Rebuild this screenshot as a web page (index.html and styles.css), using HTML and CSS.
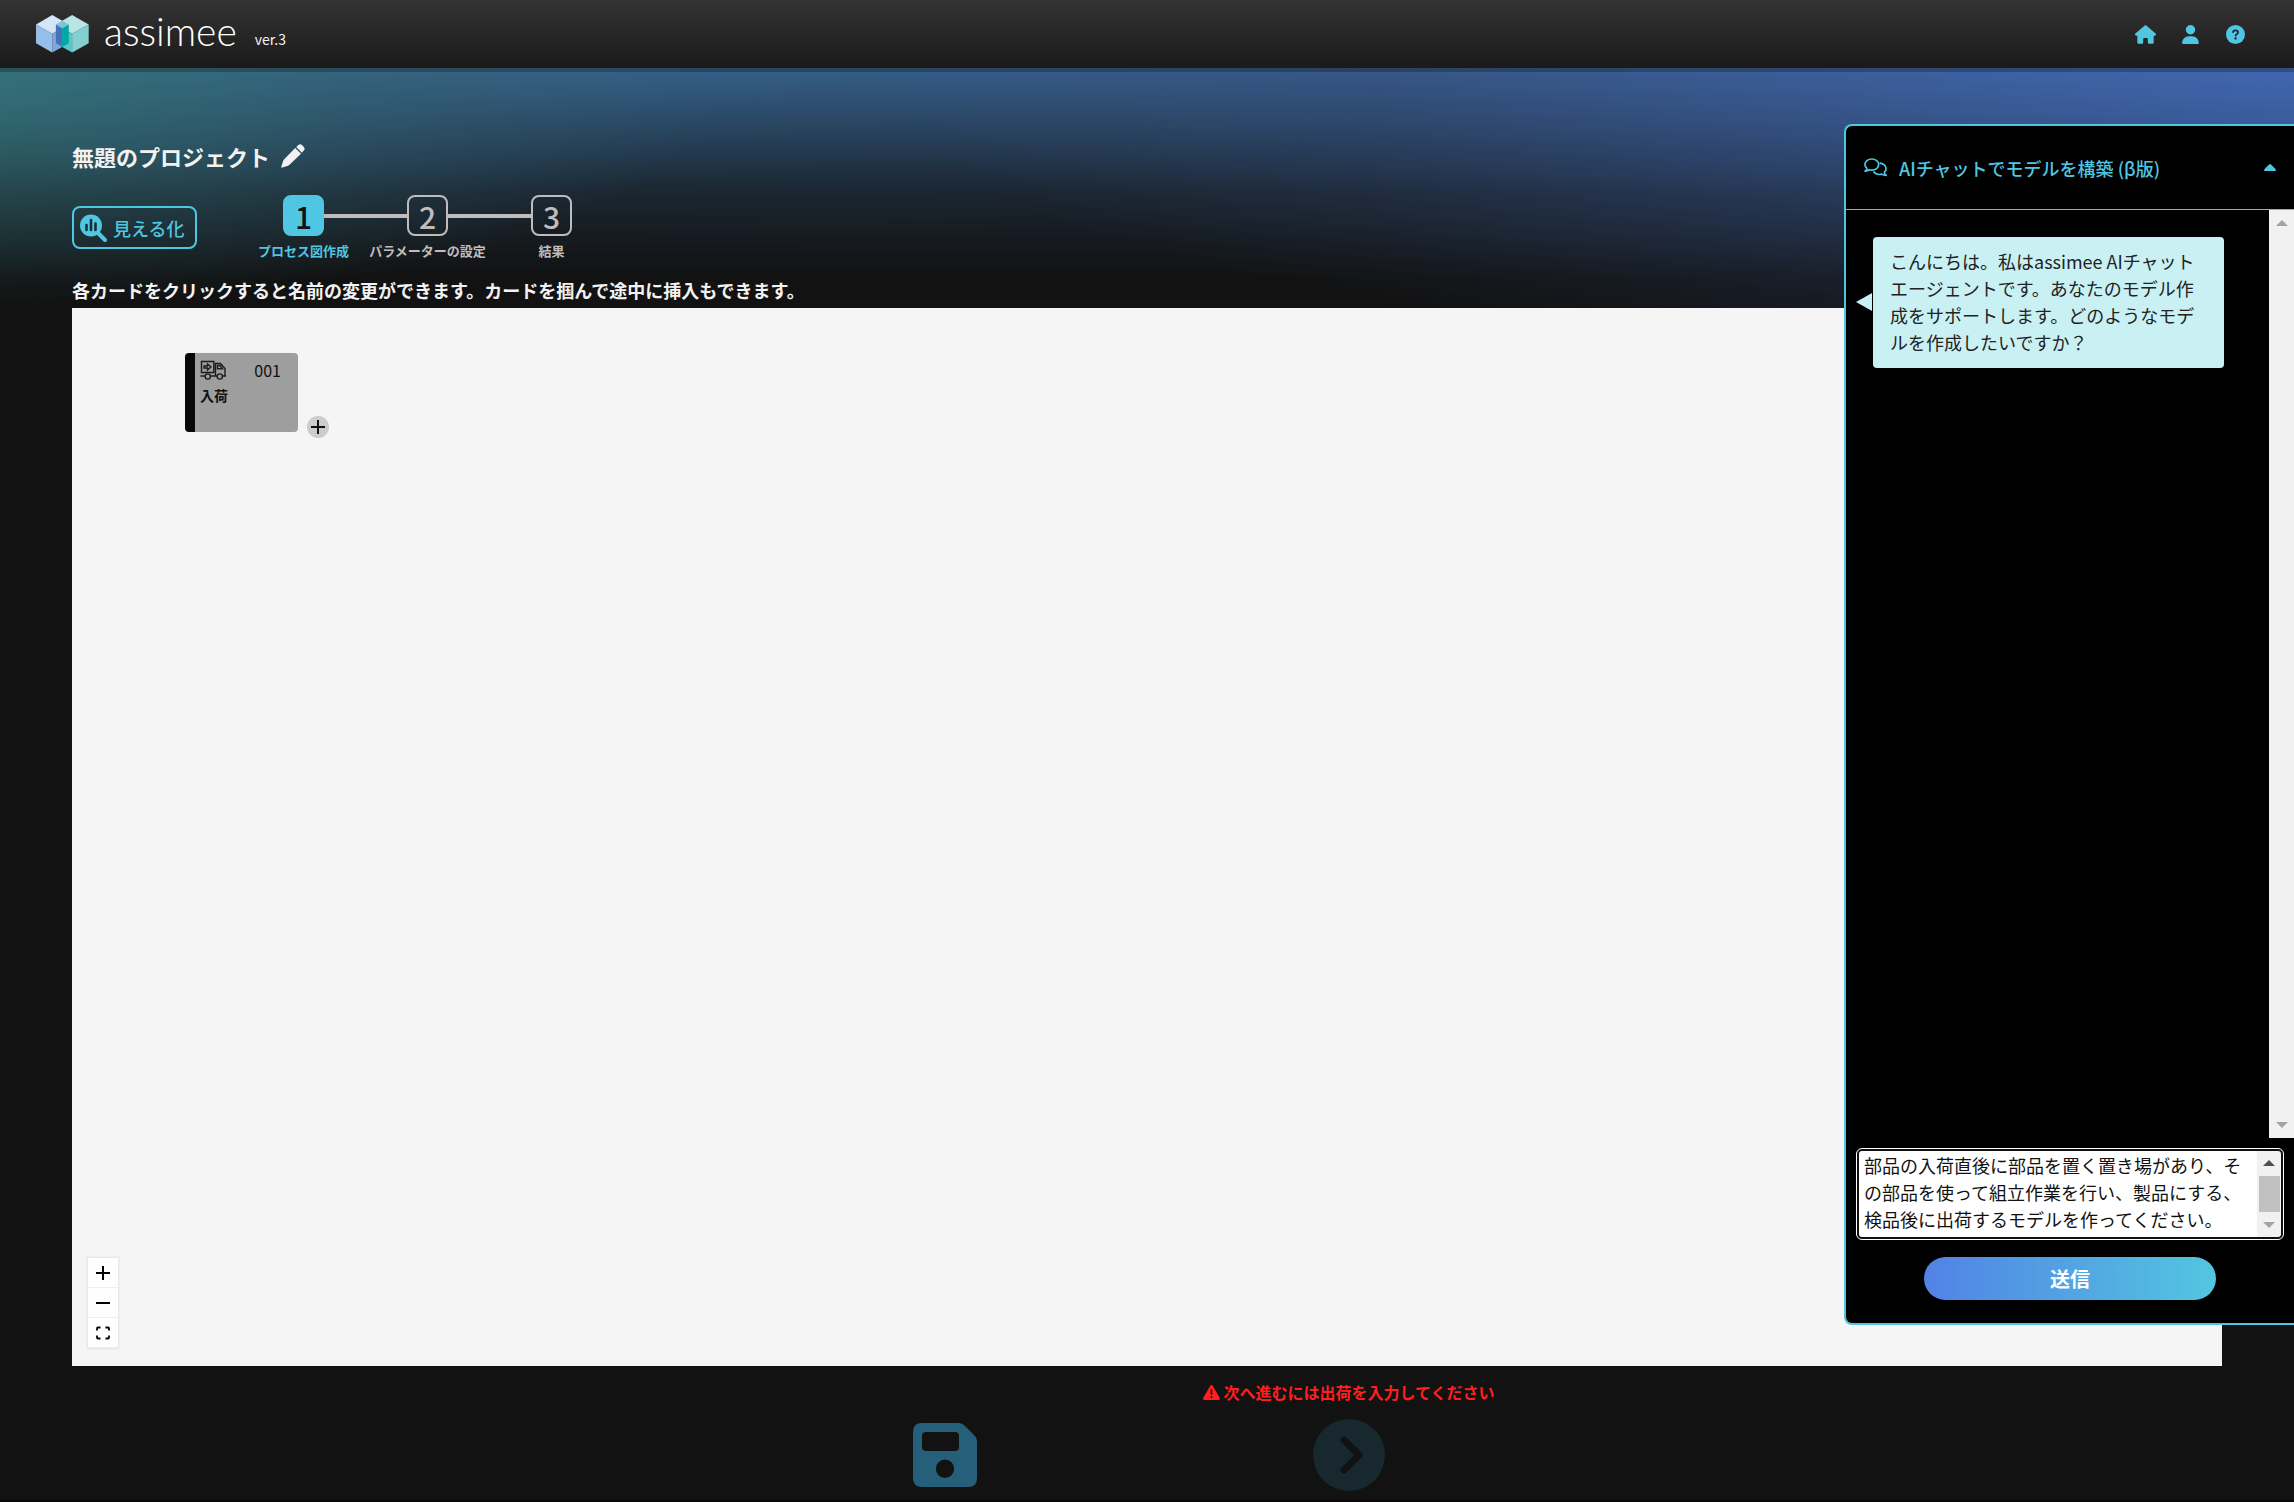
FILE: index.html
```html
<!DOCTYPE html>
<html lang="ja">
<head>
	<meta charset="UTF-8">
	<title>assimee</title>
	<link rel="stylesheet" href="styles.css">
</head>
<body>
	<header class="header">
		<a class="logo" href="#" aria-label="assimee">
			<svg class="logo_mark" viewBox="108 45 160 114">
				<path fill="#d3e5f6" d="M157 45l50 28-50 28-49-28z"/>
				<path fill="#95bfe8" d="M108 73l49 28v57l-49-28z"/>
				<path fill="#7fa8dc" d="M157 101l50-28v57l-50 28z"/>
				<path fill="#bbe4e5" d="M217 45l50 28-50 28-49-28z"/>
				<path fill="#59c4ca" d="M187 85l30 16v57l-30-17z"/>
				<path fill="#84cfd2" d="M217 101l50-28v57l-50 28z"/>
				<path fill="#80c2da" d="M187 62l20 11-20 12-19-12z"/>
				<path fill="#4772b9" d="M168 73l19 12v56l-19-11z"/>
				<path fill="#00a9a6" d="M187 85l20-12v57l-20 11z"/>
			</svg>
			<span class="logo_name">assimee</span>
			<span class="version">ver.3</span>
		</a>
		<nav class="nav">
			<a href="#" aria-label="ホーム">
				<svg width="21" height="19" viewBox="0 0 576 512"><path fill="currentColor" d="M575.8 255.5c0 18-15 32.1-32 32.1h-32l.7 184.4c0 22.1-17.9 40-40 40H392c-22.1 0-40-17.9-40-40V384c0-17.7-14.3-32-32-32H256c-17.7 0-32 14.3-32 32v88c0 22.1-17.9 40-40 40H104c-22.1 0-40-17.9-40-40V287.6H32c-18 0-32-14-32-32.1c0-9 3-17 10-24L266.4 8c7-7 15-8 22-8s15 2 21 7L564.8 231.5c8 7 12 15 11 24z"/></svg>
			</a>
			<a href="#" aria-label="アカウント">
				<svg width="17" height="19" viewBox="0 0 448 512"><path fill="currentColor" d="M224 256A128 128 0 1 0 224 0a128 128 0 1 0 0 256zm-45.7 48C79.8 304 0 383.8 0 482.3C0 498.7 13.3 512 29.7 512H418.3c16.4 0 29.7-13.3 29.7-29.7C448 383.8 368.2 304 269.7 304H178.3z"/></svg>
			</a>
			<a href="#" aria-label="ヘルプ">
				<svg width="19" height="19" viewBox="0 0 19 19"><circle cx="9.5" cy="9.5" r="9.5" fill="currentColor"/><path d="M7 7.2q.2-1.900 2.500-1.900t2.500 1.900q0 1.300-1.300 2-1.100.6-1.100 1.500" fill="none" stroke="#252525" stroke-width="1.8" stroke-linecap="round"/><circle cx="9.5" cy="13.4" r="1.2" fill="#252525"/></svg>
			</a>
		</nav>
	</header>

	<main class="main">
		<div class="project">
			<h1>無題のプロジェクト</h1>
			<button class="edit" type="button" aria-label="名前を変更">
				<svg width="24" height="24" viewBox="0 0 24 24" fill="currentColor"><path d="M14.2 4l5.800 5.800L8.500 20.700q-.9.9-2.100 1.200L1.200 23.600q-1.200.3-.9-.9L2 17.300q.4-1.200 1.200-2z"/><path d="M15.200 3l2.200-2q1.800-1.600 3.600.1l1.800 1.800q1.700 1.800 0 3.600L20.900 8.800z"/></svg>
			</button>
		</div>

		<div class="toolbar">
			<button class="visualize" type="button">
				<svg width="27" height="28" viewBox="0 0 27 28"><circle cx="11" cy="11.5" r="11" fill="#4fc6e2"/><path d="M18 19l7 7" stroke="#4fc6e2" stroke-width="4" stroke-linecap="round"/><path d="M6.500 11v5M11 6v10M15.500 9.500v6.500" stroke="#1b3036" stroke-width="2.600" stroke-linecap="round"/></svg>
				見える化
			</button>
			<ol class="steps">
				<li class="active">
					<div class="step_row"><b>1</b></div>
					<p>プロセス図作成</p>
				</li>
				<li>
					<div class="step_row"><b>2</b></div>
					<p>パラメーターの設定</p>
				</li>
				<li>
					<div class="step_row"><b>3</b></div>
					<p>結果</p>
				</li>
			</ol>
		</div>

		<p class="guide">各カードをクリックすると名前の変更ができます。カードを掴んで途中に挿入もできます。</p>

		<div class="canvas">
			<div class="node">
				<div class="card">
					<div class="card_head">
						<svg width="27" height="20" viewBox="0 0 27 20" fill="none" stroke="#1c1c1c" stroke-width="1.4"><path d="M1.500 12.500V1.500h12.300v11zM.5 16H5M10.500 16h6.500M22.500 16H26M15.500 16V3.500h5l4.500 5V16M17.500 5.500h2.500l2.500 3.200h-5z"/><path d="M4 6h3.500V4l3.500 3-3.500 3V8H4z"/><circle cx="7.8" cy="16.5" r="2.6"/><circle cx="19.8" cy="16.5" r="2.6"/></svg>
						<span>001</span>
					</div>
					<p>入荷</p>
				</div>
				<button class="add" type="button" aria-label="追加">
					<svg width="16" height="16" viewBox="0 0 16 16"><path d="M8 1v14M1 8h14" stroke="#111" stroke-width="2"/></svg>
				</button>
			</div>
			<div class="controls">
				<button type="button" aria-label="拡大"><svg width="14" height="14" viewBox="0 0 14 14"><path d="M7 0v14M0 7h14" stroke="#000" stroke-width="2"/></svg></button>
				<button type="button" aria-label="縮小"><svg width="14" height="14" viewBox="0 0 14 14"><path d="M0 7h14" stroke="#000" stroke-width="2"/></svg></button>
				<button type="button" aria-label="全体表示"><svg width="14" height="14" viewBox="0 0 14 14"><path d="M1 4.500V2.500Q1 1.500 2 1.500H4.500M9.500 1.500H12q1 0 1 1v2M13 9.500v2q0 1-1 1H9.500M4.500 12.500H2q-1 0-1-1v-2" fill="none" stroke="#000" stroke-width="1.800"/></svg></button>
			</div>
		</div>
	</main>

	<footer class="footer">
		<div class="action">
			<p class="warning"></p>
			<button type="button" aria-label="保存">
				<svg width="64" height="64" viewBox="0 0 64 64"><path fill="#265f79" fill-rule="evenodd" d="M9 0h37q3 0 5.500 2.500l10 10Q64 15 64 18v37q0 9-9 9H9q-9 0-9-9V9Q0 0 9 0zM13 9q-4 0-4 4v11q0 4 4 4h29q4 0 4-4V13q0-4-4-4zM32 36.500a9.200 9.200 0 1 0 0 18.400a9.200 9.200 0 1 0 0-18.400z"/></svg>
			</button>
		</div>
		<div class="action">
			<p class="warning">
				<svg width="17" height="15" viewBox="0 0 17 15"><path fill="currentColor" d="M7.300.7q1.200-1.400 2.400 0l7 12q.7 2-1.200 2.300h-14Q-.4 14.700.3 12.700z"/><path d="M8.500 4.800v4.400" stroke="#121212" stroke-width="1.600" stroke-linecap="round"/><circle cx="8.5" cy="12" r="1" fill="#121212"/></svg>
				次へ進むには出荷を入力してください
			</p>
			<button type="button" disabled aria-label="次へ">
				<svg width="72" height="72" viewBox="0 0 72 72"><circle cx="36" cy="36" r="36" fill="#18282f"/><path d="M31 21l15 15-15 15" fill="none" stroke="#121212" stroke-width="7" stroke-linecap="round" stroke-linejoin="round"/></svg>
			</button>
		</div>
	</footer>

	<aside class="chat">
		<button class="chat_head" type="button">
			<svg width="23" height="19" viewBox="0 0 23 19" fill="none" stroke="currentColor" stroke-width="1.7" stroke-linejoin="round"><path d="M2.900 10.300Q.9 8.600.9 6.600C.9 3.500 4 1 7.800 1s6.900 2.500 6.900 5.600-3.100 5.600-6.900 5.600q-1.300 0-2.500-.4Q3.600 13 1 13.200q1.700-1.400 1.900-2.900z"/><path d="M15.600 5.200c3.600.1 6.500 2.500 6.500 5.500q0 2-1.800 3.700.3 1.500 1.800 2.900-2.500 0-4.300-1.200-1.200.4-2.400.4-3.900 0-5.900-2.900"/></svg>
			<span>AIチャットでモデルを構築 (β版)</span>
			<svg class="caret" width="12" height="7" viewBox="0 0 12 7"><path fill="currentColor" d="M5 .5q1-1 2 0l4.700 4.800Q12.300 7 11 7H1Q-.3 7 .3 5.300z"/></svg>
		</button>
		<div class="chat_body">
			<div class="messages">
				<p class="bubble">こんにちは。私はassimee AIチャットエージェントです。あなたのモデル作成をサポートします。どのようなモデルを作成したいですか？</p>
			</div>
			<div class="scrollbar">
				<i class="up"></i>
				<i class="down"></i>
			</div>
		</div>
		<form class="compose">
			<div class="field">
				<textarea aria-label="メッセージ">部品の入荷直後に部品を置く置き場があり、その部品を使って組立作業を行い、製品にする、検品後に出荷するモデルを作ってください。</textarea>
				<div class="scrollbar field_bar">
					<i class="up"></i>
					<span class="thumb"></span>
					<i class="down"></i>
				</div>
			</div>
			<button class="send" type="button">送信</button>
		</form>
	</aside>
</body>
</html>
```
FILE: styles.css
```css
*{box-sizing: border-box;}
body,h1,p,ol{margin: 0;padding: 0;}
ol{list-style: none;}
svg{display: block;flex: none;}
button{font: inherit;color: inherit;background: none;border: 0;padding: 0;cursor: pointer;}
a{color: inherit;text-decoration: none;}

body{position: relative;display: flex;flex-direction: column;min-height: 100vh;background: #121212;color: #f2f2f2;font-family: "Noto Sans CJK JP","Noto Sans",sans-serif;font-size: 18px;overflow-x: hidden;}
/* 上部の背景グラデーション */
body::before{content: "";position: absolute;z-index: -1;top: 68px;left: 0;right: 0;height: 340px;background: linear-gradient(90deg,#34707a,#35657f 15%,#35618a 30%,#375888 60%,#4167b0);
	mask-image: linear-gradient(#000,rgba(0,0,0,0.65) 60px,rgba(0,0,0,0.26) 125px,transparent 210px),radial-gradient(32% 240px at 0 0,rgba(0,0,0,0.8),transparent),radial-gradient(62% 310px at 100% 0,rgba(0,0,0,0.7),transparent);}

/* ヘッダー */
.header{display: flex;justify-content: space-between;height: 72px;padding: 0 36px;background: linear-gradient(#333,#1a1a1a) padding-box;border-bottom: 4px solid rgba(18,18,18,0.3);}
.logo{display: flex;align-items: center;}
.logo_mark{width: 53px;height: 38px;}
.logo_name{margin-left: 15px;padding-bottom: 6px;font: 300 39px/60px Lato,sans-serif;color: #fff;}
.version{margin-left: 18px;padding-top: 10px;font-size: 14px;}
.nav{display: flex;align-items: center;color: #4fc6e2;}
.nav a{display: flex;justify-content: center;width: 45px;}

/* プロジェクト */
.main{display: flex;flex-direction: column;flex: 1;padding: 68px 72px 0;}
.project{display: flex;align-items: center;gap: 11px;}
.project h1{font-size: 22px;line-height: 32px;}
.toolbar{display: flex;align-items: center;gap: 44px;margin-top: 23px;}
.visualize{display: flex;align-items: center;gap: 6px;height: 43px;padding: 0 11px 0 6px;border: 2px solid #4fc6e2;border-radius: 8px;color: #4fc6e2;font-weight: 500;}
.steps{display: grid;grid-template-columns: repeat(3,124px);color: #c0bcbc;text-align: center;}
.step_row{display: flex;align-items: center;}
.step_row::before,.step_row::after{content: "";flex: 1;height: 4px;background: #c0bcbc;}
.steps li:first-child .step_row::before,.steps li:last-child .step_row::after{background: none;}
.step_row b{width: 41px;height: 41px;border: 2px solid #c0bcbc;border-radius: 8px;font-size: 30px;font-weight: 500;line-height: 38px;}
.steps p{margin-top: 6px;font-size: 13px;font-weight: 700;line-height: 18px;white-space: nowrap;}
.steps .active{color: #4fc6e2;}
.steps .active b{background: #4fc6e2;border-color: #4fc6e2;color: #121212;}
.guide{margin: 16px 0 4px;font-weight: 700;line-height: 28px;}

/* キャンバス */
.canvas{position: relative;flex: 1;min-height: 400px;background: #f5f5f5;color: #111;}
.node{position: absolute;top: 45px;left: 113px;display: flex;align-items: flex-end;gap: 9px;}
.card{width: 113px;height: 79px;padding: 6px 17px 0 5px;border-left: 10px solid #080808;border-radius: 4px;background: #9e9e9e;}
.card_head{display: flex;justify-content: space-between;align-items: center;font-size: 16px;line-height: 22px;}
.card p{margin-top: 4px;font-size: 14px;font-weight: 700;line-height: 20px;}
.add{display: flex;align-items: center;justify-content: center;width: 22px;height: 22px;margin-bottom: -6px;border-radius: 50%;background: #ccc;}
.controls{position: absolute;left: 16px;bottom: 18px;display: flex;flex-direction: column;box-shadow: 0 0 2px 1px rgba(0,0,0,0.08);}
.controls button{display: flex;align-items: center;justify-content: center;width: 30px;height: 30px;background: #fefefe;border-bottom: 1px solid #eee;}

/* フッター */
.footer{display: grid;grid-template-columns: repeat(2,404px);justify-content: center;padding: 14px 0 9px;border-bottom: 2px solid #0a0609;}
.action{display: flex;flex-direction: column;align-items: center;gap: 15px;}
.action button{display: flex;align-items: center;height: 72px;}
.warning{display: flex;align-items: center;gap: 3px;height: 24px;color: #ff1f1f;font-size: 16px;font-weight: 700;}

/* AIチャット */
.chat{position: absolute;top: 124px;right: 0;display: flex;flex-direction: column;width: 450px;height: calc(80vh - 1px);border: 2px solid #4fc6e2;border-right: 0;border-radius: 8px 0 0 8px;background: #000;overflow: hidden;}
.chat_head{display: flex;align-items: center;gap: 12px;height: 84px;padding: 0 18px;border-bottom: 1px solid #4fc6e2;color: #4fc6e2;font-weight: 500;}
.caret{margin-left: auto;}
.chat_body{display: flex;flex: 1;min-height: 0;}
.messages{flex: 1;padding: 27px 45px 27px 27px;}
.bubble{position: relative;padding: 11px 17px 12px;border-radius: 4px;background: #c9f1f4;color: #222;line-height: 27px;}
.bubble::before{content: "";position: absolute;top: 50%;right: 100%;margin-right: 1px;margin-top: -10px;border: 9px solid transparent;border-left: 0;border-right: 16px solid #c9f1f4;}
.scrollbar{display: flex;flex-direction: column;justify-content: space-between;align-items: center;width: 25px;padding: 10px 0;background: #f1f1f1;}
.up,.down{border: 6px solid transparent;}
.up{border-top: 0;border-bottom-color: #a3a3a3;}
.down{border-bottom: 0;border-top-color: #a3a3a3;}
.compose{display: flex;flex-direction: column;align-items: center;padding: 10px 10px 23px;}
.field{display: flex;width: 100%;padding: 2px;border: 1px solid #fff;border-radius: 6px;background: #101010;}
.field textarea{flex: 1;height: 86px;padding: 1px 0 0 5px;border: 0;border-radius: 3px 0 0 3px;outline: 0;resize: none;overflow: hidden;background: #fff;color: #111;font: inherit;line-height: 27px;}
.field_bar{width: 24px;padding: 9px 0;border-radius: 0 3px 3px 0;}
.field_bar .up{border-bottom-color: #505050;}
.thumb{width: 21px;height: 36px;background: #c1c1c1;}
.send{width: 292px;height: 43px;margin-top: 17px;border-radius: 22px;background: linear-gradient(90deg,#5282e6,#52c6e0);color: #fff;font-size: 20px;font-weight: 700;}
```
